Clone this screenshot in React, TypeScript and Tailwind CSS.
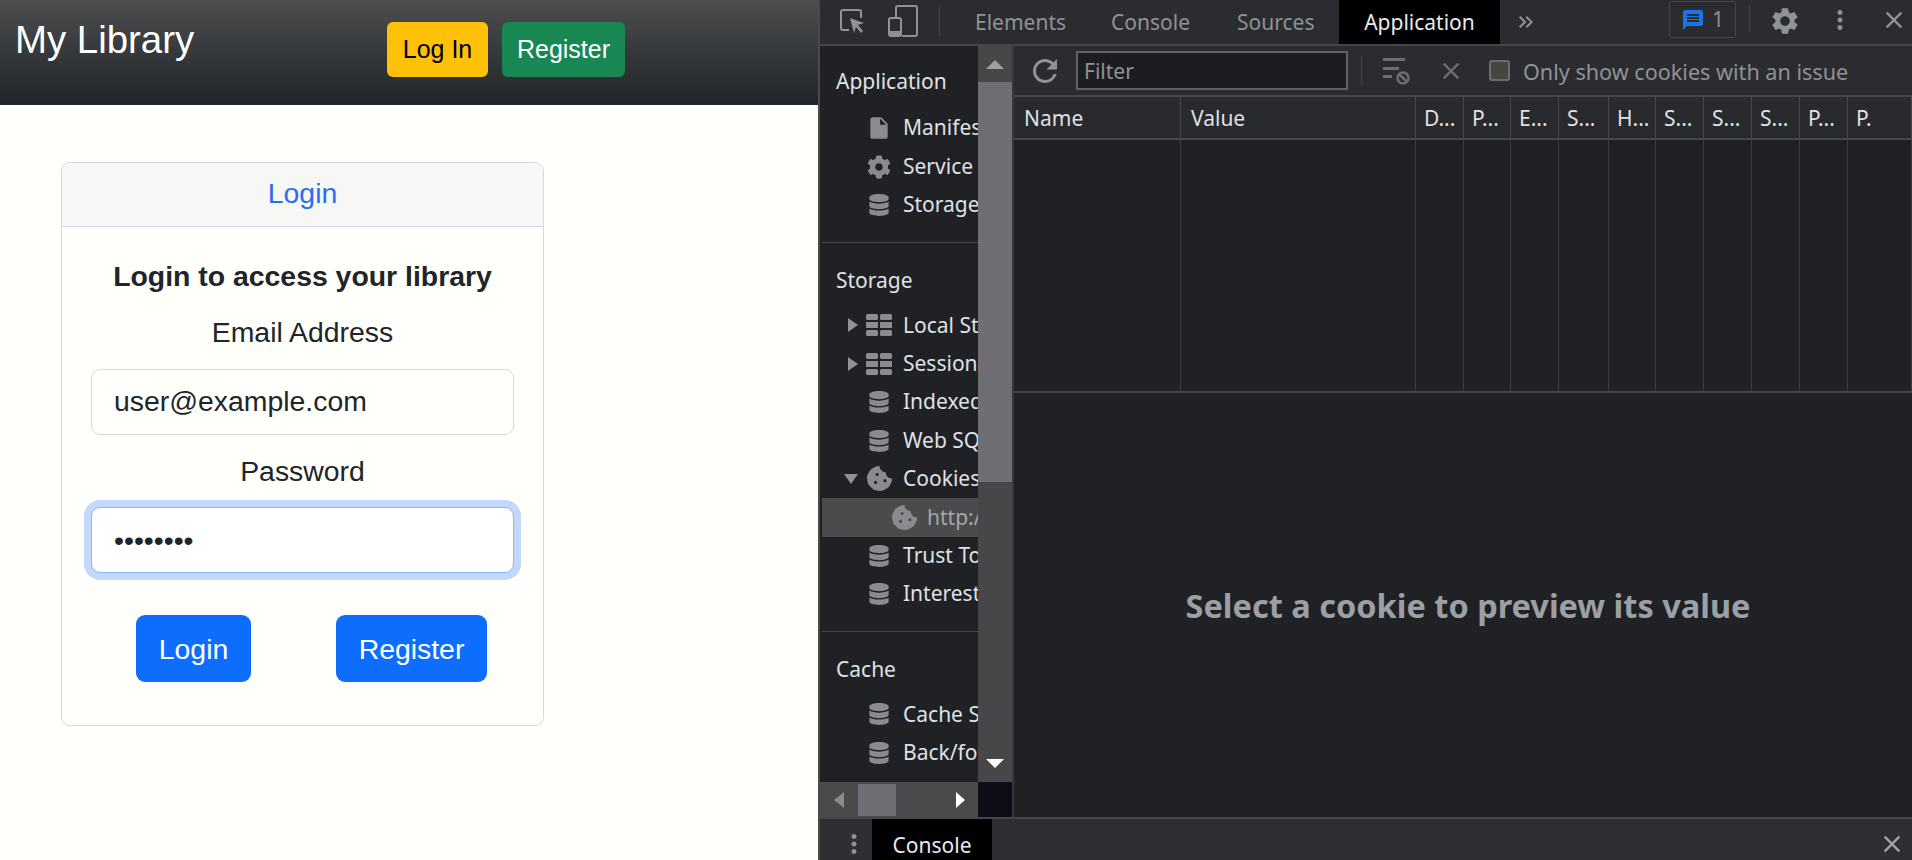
import { FaCog, FaCookieBite, FaDatabase } from "react-icons/fa";
import { MdClose, MdInsertDriveFile, MdKeyboardDoubleArrowRight, MdMessage, MdMoreVert, MdRefresh, MdSettings } from "react-icons/md";

const COLUMNS = ["Name", "Value", "D...", "P...", "E...", "S...", "H...", "S...", "S...", "S...", "P...", "P."];

function TableIcon() {
    return (
        <svg width="26" height="22" viewBox="0 0 26 22" fill="#8a8b8e">
            <rect x="0" y="0" width="12" height="6" rx="1.5" />
            <rect x="14" y="0" width="12" height="6" rx="1.5" />
            <rect x="0" y="8" width="12" height="6" />
            <rect x="14" y="8" width="12" height="6" />
            <rect x="0" y="16" width="12" height="6" rx="1.5" />
            <rect x="14" y="16" width="12" height="6" rx="1.5" />
        </svg>
    );
}

function Row({ label, icon, arrow, active, indent }: { label: string; icon: React.ReactNode; arrow?: "right" | "down"; active?: boolean; indent?: boolean }) {
    return (
        <div className={`flex h-[38.4px] w-[156px] items-center overflow-hidden whitespace-nowrap ${active ? "bg-[#4b4b4d] text-[#a5a7aa]" : "text-[#dfe1e5]"}`}>
            <div className="flex w-[44px] shrink-0 justify-end pr-[8px]">
                {arrow === "right" && <div className="h-0 w-0 border-y-[7px] border-l-[10px] border-y-transparent border-l-[#8f9195]" />}
                {arrow === "down" && <div className="h-0 w-0 border-x-[7px] border-t-[10px] border-x-transparent border-t-[#8f9195]" />}
            </div>
            <div className={`flex w-[26px] shrink-0 items-center justify-center text-[#8a8b8e] ${indent ? "ml-[25px]" : ""}`}>{icon}</div>
            <span className={indent ? "ml-[10px]" : "ml-[11px]"}>{label}</span>
        </div>
    );
}

function Header({ label }: { label: string }) {
    return <div className="flex h-[38px] items-center pl-[14px] text-[#dfe1e5]">{label}</div>;
}

function LoginPane() {
    return (
        <div className="h-[860px] w-[818px] shrink-0 bg-[#fffffc] font-['Liberation_Sans',sans-serif] text-[28.4px] text-[#212529]">
            <header className="flex h-[105px] items-start bg-gradient-to-b from-[#4c4e4f] to-[#212529] pt-[22px]">
                <h1 className="-mt-[5px] w-[387px] pl-[15px] text-[38.4px] leading-[46px] text-white">My Library</h1>
                <nav className="flex gap-[14px] text-[25px]">
                    <button className="h-[55px] w-[101px] rounded-[6px] bg-[#ffc107] text-black">Log In</button>
                    <button className="h-[55px] w-[123px] rounded-[6px] bg-[#198754] text-white">Register</button>
                </nav>
            </header>
            <div className="ml-[61px] mt-[57px] w-[483px] rounded-[9px] border border-[#d9d9d9]">
                <div className="flex h-[64px] items-center justify-center rounded-t-[9px] border-b border-[#d5d7dd] bg-[#f7f7f6] pb-[2px] text-[#2a6ef0]">Login</div>
                <div className="flex flex-col items-center px-[29px] pb-[43px] pt-[29px] leading-[40px]">
                    <h2 className="font-bold">Login to access your library</h2>
                    <label className="mt-[16px]">Email Address</label>
                    <input readOnly value="user@example.com" className="mt-[17px] h-[66px] w-[423px] rounded-[9px] border border-[#d8d8d8] bg-[#fffffc] px-[22px] pb-[2px] outline-none" />
                    <label className="mt-[16px]">Password</label>
                    <input readOnly type="password" value="12345678" className="mt-[16px] h-[66px] w-[423px] rounded-[9px] border border-[#86b7fe] bg-white px-[22px] shadow-[0_0_0_7px_#c3d8fb] outline-none" />
                    <div className="mt-[42px] flex w-full gap-[85px] pl-[45px] text-white">
                        <button className="h-[67px] w-[115px] rounded-[9px] bg-[#0d6efd]">Login</button>
                        <button className="h-[67px] w-[151px] rounded-[9px] bg-[#0d6efd]">Register</button>
                    </div>
                </div>
            </div>
        </div>
    );
}

function TopBar() {
    return (
        <div className="flex h-[46px] shrink-0 border-b-2 border-[#45474b] bg-[#2b2c2f] text-[#8f9296]">
            <div className="flex w-[135px] items-center pl-[19px] pb-[2px]">
                <svg width="26" height="26" viewBox="0 0 26 26" fill="none">
                    <path d="M10 22H4a2 2 0 0 1-2-2V4a2 2 0 0 1 2-2h16a2 2 0 0 1 2 2v6" stroke="#8f9296" strokeWidth="2" />
                    <path d="M11 10l14 5-6 2 5 6-2 2-5-6-2 6z" fill="#8f9296" />
                </svg>
                <svg className="ml-[23px]" width="30" height="32" viewBox="0 0 30 32" fill="none">
                    <path d="M8 12V3a2 2 0 0 1 2-2h17a2 2 0 0 1 2 2v26a2 2 0 0 1-2 2H14" stroke="#8f9296" strokeWidth="2" />
                    <rect x="1" y="13" width="12" height="18" rx="2" stroke="#8f9296" strokeWidth="2" />
                    <rect x="2" y="26" width="10" height="4" fill="#8f9296" />
                </svg>
                <div className="ml-[21px] h-[30px] w-px bg-[#45474b]" />
            </div>
            <div className="flex h-[44px] items-center">
                <span className="ml-[20px] w-[136px] pt-[1px]">Elements</span>
                <span className="w-[126px] pt-[1px]">Console</span>
                <span className="w-[102px] pt-[1px]">Sources</span>
                <span className="flex h-full w-[161px] items-center justify-center bg-black pt-[1px] text-[#e8eaed]">Application</span>
                <MdKeyboardDoubleArrowRight className="ml-[14px] text-[#8f9296]" size={24} />
            </div>
            <div className="ml-[131px] mt-px flex h-[37px] w-[67px] items-center justify-center gap-[7px] rounded-[3px] border border-[#45474b]">
                <MdMessage className="text-[#1a73e8]" size={24} />
                <span>1</span>
            </div>
            <div className="ml-[13px] mt-[5px] h-[27px] w-px bg-[#45474b]" />
            <MdSettings className="ml-[19px] mt-[5px]" size={32} />
            <MdMoreVert className="ml-[24px] mt-[5px]" size={30} />
            <MdClose className="ml-[25px] mt-[6px]" size={28} />
        </div>
    );
}

function Sidebar() {
    const db = <FaDatabase size={22} />;
    return (
        <div className="flex w-[194px] shrink-0 flex-col border-r-2 border-[#37383b]">
            <div className="flex h-[736px]">
                <div className="w-[158px] pl-[2px]">
                    <div className="w-[156px]">
                        <div className="mt-[17px]" />
                        <Header label="Application" />
                        <div className="mt-[8px]" />
                        <Row label="Manifest" icon={<MdInsertDriveFile size={28} />} />
                        <Row label="Service Workers" icon={<FaCog size={24} />} />
                        <Row label="Storage" icon={db} />
                        <div className="mt-[18px] border-t border-[#45474b]" />
                        <div className="mt-[19px]" />
                        <Header label="Storage" />
                        <div className="mt-[6px]" />
                        <Row label="Local Storage" icon={<TableIcon />} arrow="right" />
                        <Row label="Session Storage" icon={<TableIcon />} arrow="right" />
                        <Row label="IndexedDB" icon={db} />
                        <Row label="Web SQL" icon={db} />
                        <Row label="Cookies" icon={<FaCookieBite size={25} />} arrow="down" />
                        <Row label="http://localhost" icon={<FaCookieBite size={25} />} active indent />
                        <Row label="Trust Tokens" icon={db} />
                        <Row label="Interest Groups" icon={db} />
                        <div className="mt-[18px] border-t border-[#45474b]" />
                        <div className="mt-[18px]" />
                        <Header label="Cache" />
                        <div className="mt-[7px]" />
                        <Row label="Cache Storage" icon={db} />
                        <Row label="Back/forward cache" icon={db} />
                    </div>
                </div>
                <div className="flex w-[34px] flex-col items-center bg-[#474749]">
                    <div className="flex h-[36px] w-full items-center justify-center">
                        <div className="h-0 w-0 border-x-[9px] border-b-[9px] border-x-transparent border-b-[#a0a0a3]" />
                    </div>
                    <div className="h-[400px] w-full bg-[#6f6e74]" />
                    <div className="mt-auto mb-[14px] h-0 w-0 border-x-[9px] border-t-[9px] border-x-transparent border-t-white" />
                </div>
            </div>
            <div className="flex h-[35px]">
                <div className="flex w-[158px] items-center bg-[#4a4a4c] pl-[14px]">
                    <div className="h-0 w-0 border-y-[8px] border-r-[10px] border-y-transparent border-r-[#8b8b8e]" />
                    <div className="ml-[14px] h-[32px] w-[38px] bg-[#6f6e74]" />
                    <div className="ml-[60px] h-0 w-0 border-y-[8px] border-l-[9px] border-y-transparent border-l-white" />
                </div>
                <div className="w-[34px] bg-[#0d0d18]" />
            </div>
        </div>
    );
}

function CookieTable() {
    return (
        <div className="flex min-w-0 flex-1 flex-col">
            <div className="flex h-[51px] shrink-0 items-center border-b-2 border-[#45474b] bg-[#2b2c2f] text-[#8f9296]">
                <MdRefresh className="ml-[13px]" size={36} />
                <div className="ml-[13px] flex h-[39px] w-[272px] items-center border-2 border-[#5f6368] bg-[#1c1d20] pl-[6px] pt-[3px]">Filter</div>
                <div className="ml-[13px] h-[29px] w-px bg-[#45474b]" />
                <svg className="ml-[20px] text-[#6b6d70]" width="28" height="28" viewBox="0 0 28 28" fill="currentColor">
                    <rect x="1" y="1" width="22" height="3" />
                    <rect x="1" y="10" width="16" height="3" />
                    <rect x="1" y="18" width="9" height="3" />
                    <circle cx="21" cy="21" r="5.5" fill="none" stroke="currentColor" strokeWidth="2.5" />
                    <path d="M17 17l8 8" stroke="currentColor" strokeWidth="2.5" />
                </svg>
                <MdClose className="ml-[27px] text-[#6b6d70]" size={28} />
                <div className="ml-[24px] h-[21px] w-[21px] rounded-[3px] border-2 border-[#6b6d70] bg-[#45463f]" />
                <span className="ml-[13px] whitespace-nowrap pt-[3px] text-[21.6px]">Only show cookies with an issue</span>
            </div>
            <div className="grid h-[43px] shrink-0 grid-cols-[167px_235px_48px_47px_48px_50px_47px_48px_48px_48px_48px_1fr] border-b-2 border-[#45474b] bg-[#292a2d] text-[#dfe1e5]">
                {COLUMNS.map((col, i) => (
                    <div key={i} className={`flex items-center overflow-hidden whitespace-nowrap border-r border-[#45474b] pt-[3px] ${i < 2 ? "pl-[10px]" : "pl-[8px]"}`}>
                        {col}
                    </div>
                ))}
            </div>
            <div className="grid h-[253px] shrink-0 grid-cols-[167px_235px_48px_47px_48px_50px_47px_48px_48px_48px_48px_1fr] border-b-2 border-[#45474b]">
                {COLUMNS.map((_, i) => (
                    <div key={i} className="border-r border-[#3c3d41]" />
                ))}
            </div>
            <div className="flex flex-1 items-center justify-center pl-[10px] pt-[2px] font-['Noto_Sans',sans-serif] text-[32.5px] font-bold text-[#9aa0a6]">
                Select a cookie to preview its value
            </div>
        </div>
    );
}

function DevTools() {
    return (
        <div className="flex h-[860px] min-w-0 flex-1 flex-col border-l-2 border-[#4a4a4c] bg-[#202124] font-['Noto_Sans',sans-serif] text-[21px]">
            <TopBar />
            <div className="flex h-[771px] shrink-0">
                <Sidebar />
                <CookieTable />
            </div>
            <div className="flex flex-1 items-start overflow-hidden border-t-2 border-[#45474b] bg-[#2e2f32] text-[#e8eaed]">
                <MdMoreVert className="ml-[19px] mt-[10px] text-[#8f9296]" size={30} />
                <div className="ml-[3px] flex h-[54px] w-[120px] shrink-0 items-center justify-center bg-black">Console</div>
                <MdClose className="ml-auto mr-[6px] mt-[11px] text-[#a0a2a5]" size={28} />
            </div>
        </div>
    );
}

export default function App() {
    return (
        <div className="flex h-[860px] w-[1912px] overflow-hidden">
            <LoginPane />
            <DevTools />
        </div>
    );
}
